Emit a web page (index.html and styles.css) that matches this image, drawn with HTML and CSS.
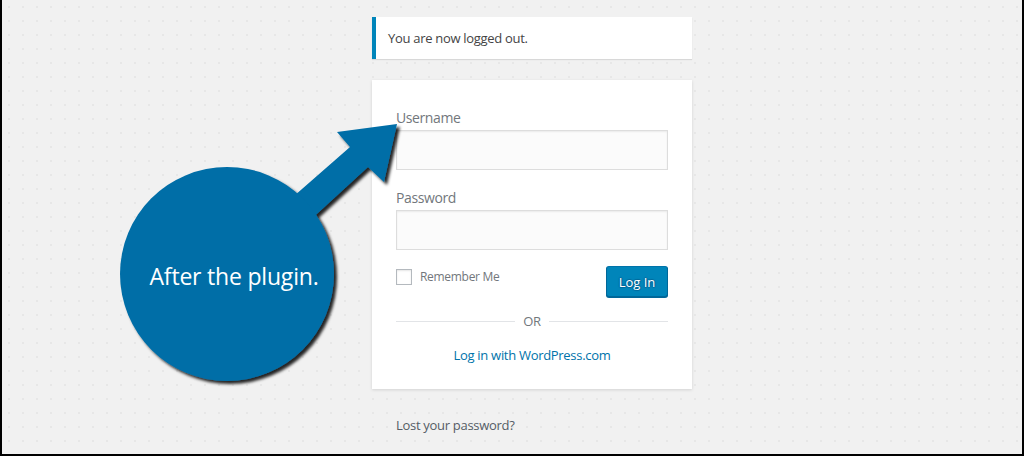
FILE: index.html
```html
<!DOCTYPE html>
<html lang="en">
<head>
<meta charset="utf-8">
<title>Log In</title>
<link rel="stylesheet" href="styles.css">
</head>
<body>
<div class="frame">
  <main class="login">
    <div class="notice">You are now logged out.</div>
    <form class="card">
      <label class="field-label" for="user">Username</label>
      <input class="field" id="user" type="text">
      <label class="field-label" for="pass">Password</label>
      <input class="field" id="pass" type="password">
      <div class="row">
        <label class="remember"><span class="check"></span>Remember Me</label>
        <button class="btn" type="button">Log In</button>
      </div>
      <div class="divider"><span class="line"></span><span class="or">OR</span><span class="line"></span></div>
      <a class="wpcom" href="#">Log in with WordPress.com</a>
    </form>
    <p class="nav"><a href="#">Lost your password?</a></p>
  </main>
  <div class="callout">
    <svg class="callout-art" width="300" height="290" viewBox="110 110 300 290" aria-hidden="true">
      <defs>
        <filter id="sh" x="-20%" y="-20%" width="140%" height="140%">
          <feDropShadow dx="3" dy="3" stdDeviation="1.6" flood-color="#000" flood-opacity="0.85"/>
        </filter>
      </defs>
      <g filter="url(#sh)" fill="#006ea7">
        <polygon points="262,224 350,147 337,132 397,124 384,182 368,167 282,246"/>
        <circle cx="227" cy="274" r="107"/>
      </g>
    </svg>
    <span class="callout-text">After the plugin.</span>
  </div>
</div>
</body>
</html>
```
FILE: styles.css
```css
html, body {
  margin: 0;
  padding: 0;
}
body {
  font-family: "Open Sans", "Noto Sans", sans-serif;
  color: #444;
  letter-spacing: -0.3px;
}
.frame {
  position: relative;
  height: 456px;
  box-sizing: border-box;
  border: 2px solid #000;
  border-top: 0;
  background-color: #f1f1f1;
  background-image: radial-gradient(circle, #e7e7e7 0.8px, transparent 1.2px);
  background-size: 14px 14px;
  overflow: hidden;
}
.login {
  width: 320px;
  margin-left: 370px;
  padding-top: 17px;
}
.notice {
  background: #fff;
  border-left: 4px solid #0085ba;
  box-shadow: 0 1px 1px rgba(0,0,0,.1);
  padding: 12px;
  font-size: 13px;
  line-height: 18px;
  color: #444;
  margin-bottom: 21px;
}
.card {
  display: flex;
  flex-direction: column;
  background: #fff;
  box-shadow: 0 1px 3px rgba(0,0,0,.13);
  padding: 28px 24px 25px;
  margin: 0;
}
.field-label {
  font-size: 14px;
  line-height: 20px;
  color: #72777c;
  letter-spacing: -0.4px;
}
.field {
  box-sizing: border-box;
  height: 40px;
  margin: 2px 0 18px;
  border: 1px solid #ddd;
  background: #fbfbfb;
  box-shadow: inset 0 1px 2px rgba(0,0,0,.07);
  font-size: 20px;
  padding: 3px;
  outline: none;
}
.row {
  display: flex;
  justify-content: space-between;
  align-items: flex-start;
  margin-top: -2px;
}
.remember {
  display: flex;
  align-items: center;
  gap: 8px;
  font-size: 12px;
  line-height: 18px;
  color: #72777c;
  padding-top: 2px;
}
.check {
  width: 16px;
  height: 16px;
  box-sizing: border-box;
  border: 1px solid #b4b9be;
  background: #fff;
  box-shadow: inset 0 1px 2px rgba(0,0,0,.1);
}
.btn {
  height: 31px;
  width: 62px;
  padding: 0;
  font-family: inherit;
  font-size: 13px;
  letter-spacing: 0;
  color: #fff;
  background: #0085ba;
  border: 1px solid;
  border-color: #0073aa #006799 #006799;
  border-radius: 3px;
  box-shadow: 0 1px 0 #006799;
  text-shadow: 0 -1px 1px #006799, 1px 0 1px #006799, 0 1px 1px #006799, -1px 0 1px #006799;
}
.divider {
  display: flex;
  align-items: center;
  gap: 8px;
  margin-top: 15px;
}
.line {
  flex: 1;
  height: 1px;
  background: #e2e4e7;
}
.or {
  font-size: 13px;
  line-height: 18px;
  color: #72777c;
}
.wpcom {
  align-self: center;
  margin-top: 16px;
  font-size: 13px;
  line-height: 18px;
  color: #0073aa;
  text-decoration: none;
}
.nav {
  margin: 27px 0 0;
  padding-left: 24px;
  font-size: 13px;
  line-height: 18px;
}
.nav a {
  color: #555d66;
  text-decoration: none;
}
.callout {
  position: absolute;
  left: 108px;
  top: 110px;
  width: 300px;
  height: 290px;
}
.callout-art {
  display: block;
}
.callout-text {
  position: absolute;
  left: 0;
  top: 152px;
  width: 248px;
  text-align: center;
  font-size: 23px;
  line-height: 28px;
  letter-spacing: -0.2px;
  color: #fff;
}
```
